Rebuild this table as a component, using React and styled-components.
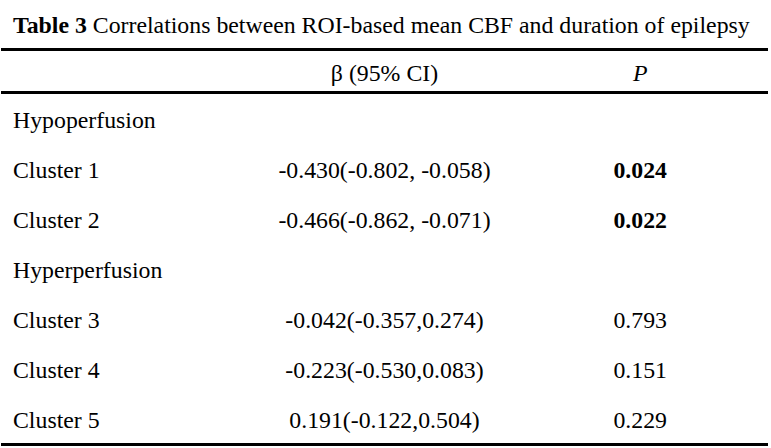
import styled, { createGlobalStyle } from "styled-components"

const GlobalStyle = createGlobalStyle`
  html, body {
    margin: 0;
    padding: 0;
    background: #ffffff;
  }
  body {
    font-family: "Liberation Serif", "Times New Roman", serif;
    color: #000000;
  }
`

const rows = [
  { label: "Hypoperfusion", group: true },
  { label: "Cluster 1", beta: "-0.430(-0.802, -0.058)", p: "0.024", sig: true },
  { label: "Cluster 2", beta: "-0.466(-0.862, -0.071)", p: "0.022", sig: true },
  { label: "Hyperperfusion", group: true },
  { label: "Cluster 3", beta: "-0.042(-0.357,0.274)", p: "0.793" },
  { label: "Cluster 4", beta: "-0.223(-0.530,0.083)", p: "0.151" },
  { label: "Cluster 5", beta: "0.191(-0.122,0.504)", p: "0.229" },
]

export default function App() {
  return (
    <Page>
      <GlobalStyle />
      <Caption>
        <strong>Table 3</strong> Correlations between ROI-based mean CBF and duration of epilepsy
      </Caption>
      <Table>
        <HeadRow>
          <Cell />
          <Cell $center>β (95% CI)</Cell>
          <Cell $center><em>P</em></Cell>
        </HeadRow>
        <Body>
          {rows.map((r) => (
            <Row key={r.label}>
              <Cell>{r.label}</Cell>
              <Cell $center>{r.beta}</Cell>
              <Cell $center $bold={r.sig}>{r.p}</Cell>
            </Row>
          ))}
        </Body>
      </Table>
    </Page>
  )
}

const Page = styled.div`
  width: 771px;
  height: 448px;
  background: #fff;
  overflow: hidden;
`

const Caption = styled.div`
  height: 48px;
  box-sizing: border-box;
  padding: 12px 0 0 13px;
  font-size: 23.8px;
  line-height: 26px;
  white-space: nowrap;

  strong {
    font-weight: 700;
  }
`

const Table = styled.div`
  width: 767px;
  margin-left: 1px;
  border-top: 3px solid #000;
  border-bottom: 3px solid #000;
  font-size: 23.8px;
`

const HeadRow = styled.div`
  display: grid;
  grid-template-columns: repeat(3, 1fr);
  height: 40px;
  align-items: center;
  border-bottom: 3px solid #000;
`

const Body = styled.div`
  display: grid;
  grid-template-rows: repeat(7, 1fr);
  height: 349px;
`

const Row = styled.div`
  display: grid;
  grid-template-columns: repeat(3, 1fr);
  align-items: center;
`

const Cell = styled.div`
  padding-top: 3px;
  padding-left: ${(p) => (p.$center ? "0" : "12px")};
  text-align: ${(p) => (p.$center ? "center" : "left")};
  font-weight: ${(p) => (p.$bold ? 700 : 400)};
  line-height: 26px;
  white-space: nowrap;

  em {
    font-style: italic;
  }
`
